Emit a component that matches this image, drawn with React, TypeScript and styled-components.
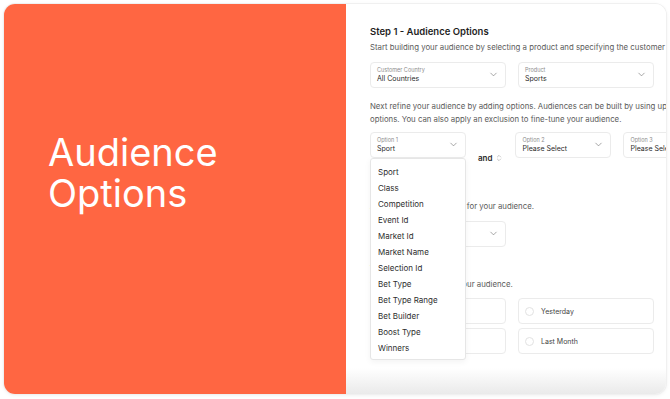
import styled, { createGlobalStyle } from "styled-components";
import { ChevronDown, ChevronsUpDown } from "lucide-react";

const GlobalStyle = createGlobalStyle`
    html, body {
        margin: 0;
        padding: 0;
        background: #ffffff;
        font-family: Inter, "Noto Sans", sans-serif;
    }
`;

const optionItems = [
    "Sport",
    "Class",
    "Competition",
    "Event Id",
    "Market Id",
    "Market Name",
    "Selection Id",
    "Bet Type",
    "Bet Type Range",
    "Bet Builder",
    "Boost Type",
    "Winners",
];

interface SelectProps {
    label: string;
    value: string;
    width: number;
}

const Select = ({ label, value, width }: SelectProps) => {
    return (
        <SelectBox $width={width}>
            <SelectText>
                <SelectLabel>{label}</SelectLabel>
                <SelectValue>{value}</SelectValue>
            </SelectText>
            <ChevronDown size={11} strokeWidth={1.3} color="#6b6b6b" />
        </SelectBox>
    );
};

const App = () => {
    return (
        <>
            <GlobalStyle />
            <Page>
                <Card>
                    <Hero>
                        <HeroTitle>Audience Options</HeroTitle>
                    </Hero>
                    <Panel>
                        <Title>Step 1 - Audience Options</Title>
                        <Text>
                            Start building your audience by selecting a product and specifying the customer country.
                        </Text>
                        <Row>
                            <Select label="Customer Country" value="All Countries" width={136} />
                            <Select label="Product" value="Sports" width={136} />
                        </Row>
                        <Paragraph>
                            Next refine your audience by adding options. Audiences can be built by using up to three
                            options. You can also apply an exclusion to fine-tune your audience.
                        </Paragraph>
                        <OptionRow>
                            <OptionSlot>
                                <Select label="Option 1" value="Sport" width={96} />
                                <Menu>
                                    {optionItems.map((item) => (
                                        <MenuItem key={item}>{item}</MenuItem>
                                    ))}
                                </Menu>
                            </OptionSlot>
                            <Joiner>
                                and
                                <ChevronsUpDown size={8} strokeWidth={1.4} color="#8a8a8a" />
                            </Joiner>
                            <Select label="Option 2" value="Please Select" width={96} />
                            <Select label="Option 3" value="Please Select" width={96} />
                        </OptionRow>
                        <Subhead $top={21}>Exclusion</Subhead>
                        <Text>Add an optional exclusion for your audience.</Text>
                        <Row>
                            <Select label="Exclusion" value="Please Select" width={136} />
                        </Row>
                        <Subhead $top={15}>Time Period</Subhead>
                        <Text>Select a time period for your audience.</Text>
                        <RadioGrid>
                            <RadioCard>
                                <Radio />
                                Today
                            </RadioCard>
                            <RadioCard>
                                <Radio />
                                Yesterday
                            </RadioCard>
                            <RadioCard>
                                <Radio />
                                Last Week
                            </RadioCard>
                            <RadioCard>
                                <Radio />
                                Last Month
                            </RadioCard>
                        </RadioGrid>
                    </Panel>
                </Card>
            </Page>
        </>
    );
};

export default App;

const Page = styled.div`
    width: 670px;
    height: 399px;
    padding: 4px;
    box-sizing: border-box;
`;
const Card = styled.div`
    display: flex;
    width: 662px;
    height: 390px;
    border-radius: 11px;
    overflow: hidden;
    background: #ffffff;
    box-shadow: 0 0 0 1px #f0f0f0, 0 1px 4px rgba(0, 0, 0, 0.08);
`;
const Hero = styled.div`
    flex: 0 0 342px;
    background-color: #ff6642;
    padding: 128px 0 0 44px;
    box-sizing: border-box;
`;
const HeroTitle = styled.h1`
    margin: 0;
    width: 220px;
    color: #ffffff;
    font-family: Inter, sans-serif;
    font-size: 38px;
    font-weight: 400;
    line-height: 41px;
`;
const Panel = styled.div`
    flex: 1;
    min-width: 0;
    padding: 21px 0 0 24px;
    box-sizing: border-box;
    background: linear-gradient(to bottom, #ffffff calc(100% - 26px), #eaeaea 100%);
    overflow: hidden;
    white-space: nowrap;
`;
const Title = styled.h2`
    margin: 0;
    font-size: 9.5px;
    font-weight: 600;
    color: #1e1e1e;
    line-height: 13px;
`;
const Text = styled.p`
    margin: 3px 0 0;
    font-size: 7.8px;
    line-height: 13px;
    color: #5b5b5b;
`;
const Paragraph = styled.p`
    margin: 12px 0 0;
    width: 345px;
    white-space: normal;
    font-size: 7.8px;
    line-height: 13px;
    color: #5b5b5b;
`;
const Row = styled.div`
    display: flex;
    gap: 12px;
    margin: 8px 0 0;
`;
const SelectBox = styled.div<{ $width: number }>`
    flex: 0 0 auto;
    width: ${(p) => p.$width}px;
    height: 26px;
    box-sizing: border-box;
    border: 1px solid #ebebeb;
    border-radius: 4px;
    background: #ffffff;
    display: flex;
    align-items: center;
    justify-content: space-between;
    padding: 0 6px 1px 6px;
`;
const SelectText = styled.div`
    display: flex;
    flex-direction: column;
`;
const SelectLabel = styled.span`
    font-size: 5.5px;
    line-height: 8px;
    color: #8d8d8d;
`;
const SelectValue = styled.span`
    font-size: 7px;
    line-height: 10px;
    color: #2a2a2a;
`;
const OptionRow = styled.div`
    display: flex;
    align-items: flex-start;
    gap: 12px;
    margin-top: 6px;
`;
const OptionSlot = styled.div`
    position: relative;
    flex: 0 0 auto;
`;
const Joiner = styled.span`
    flex: 0 0 auto;
    display: flex;
    align-items: center;
    gap: 3px;
    margin-top: 21px;
    font-size: 8px;
    font-weight: 600;
    color: #2a2a2a;
`;
const Menu = styled.ul`
    position: absolute;
    top: 26px;
    left: 0;
    z-index: 2;
    width: 96px;
    margin: 0;
    padding: 5px 0 3px;
    box-sizing: border-box;
    list-style: none;
    background: #ffffff;
    border: 1px solid #e6e6e6;
    border-radius: 3px;
    box-shadow: 0 2px 6px rgba(0, 0, 0, 0.05);
`;
const MenuItem = styled.li`
    padding: 0 7px;
    height: 16px;
    line-height: 16px;
    font-size: 8px;
    color: #2e2e2e;
`;
const Subhead = styled.h3<{ $top: number }>`
    margin: ${(p) => p.$top}px 0 0;
    font-size: 9px;
    line-height: 13px;
    font-weight: 600;
    color: #1e1e1e;
`;
const RadioGrid = styled.div`
    display: grid;
    grid-template-columns: 136px 136px;
    gap: 4px 12px;
    margin-top: 7px;
`;
const RadioCard = styled.div`
    display: flex;
    align-items: center;
    gap: 7px;
    height: 26px;
    box-sizing: border-box;
    padding: 0 6px;
    border: 1px solid #ebebeb;
    border-radius: 4px;
    font-size: 7px;
    color: #444;
`;
const Radio = styled.span`
    width: 9px;
    height: 9px;
    box-sizing: border-box;
    border-radius: 50%;
    border: 1px solid #e2e2e2;
`;
